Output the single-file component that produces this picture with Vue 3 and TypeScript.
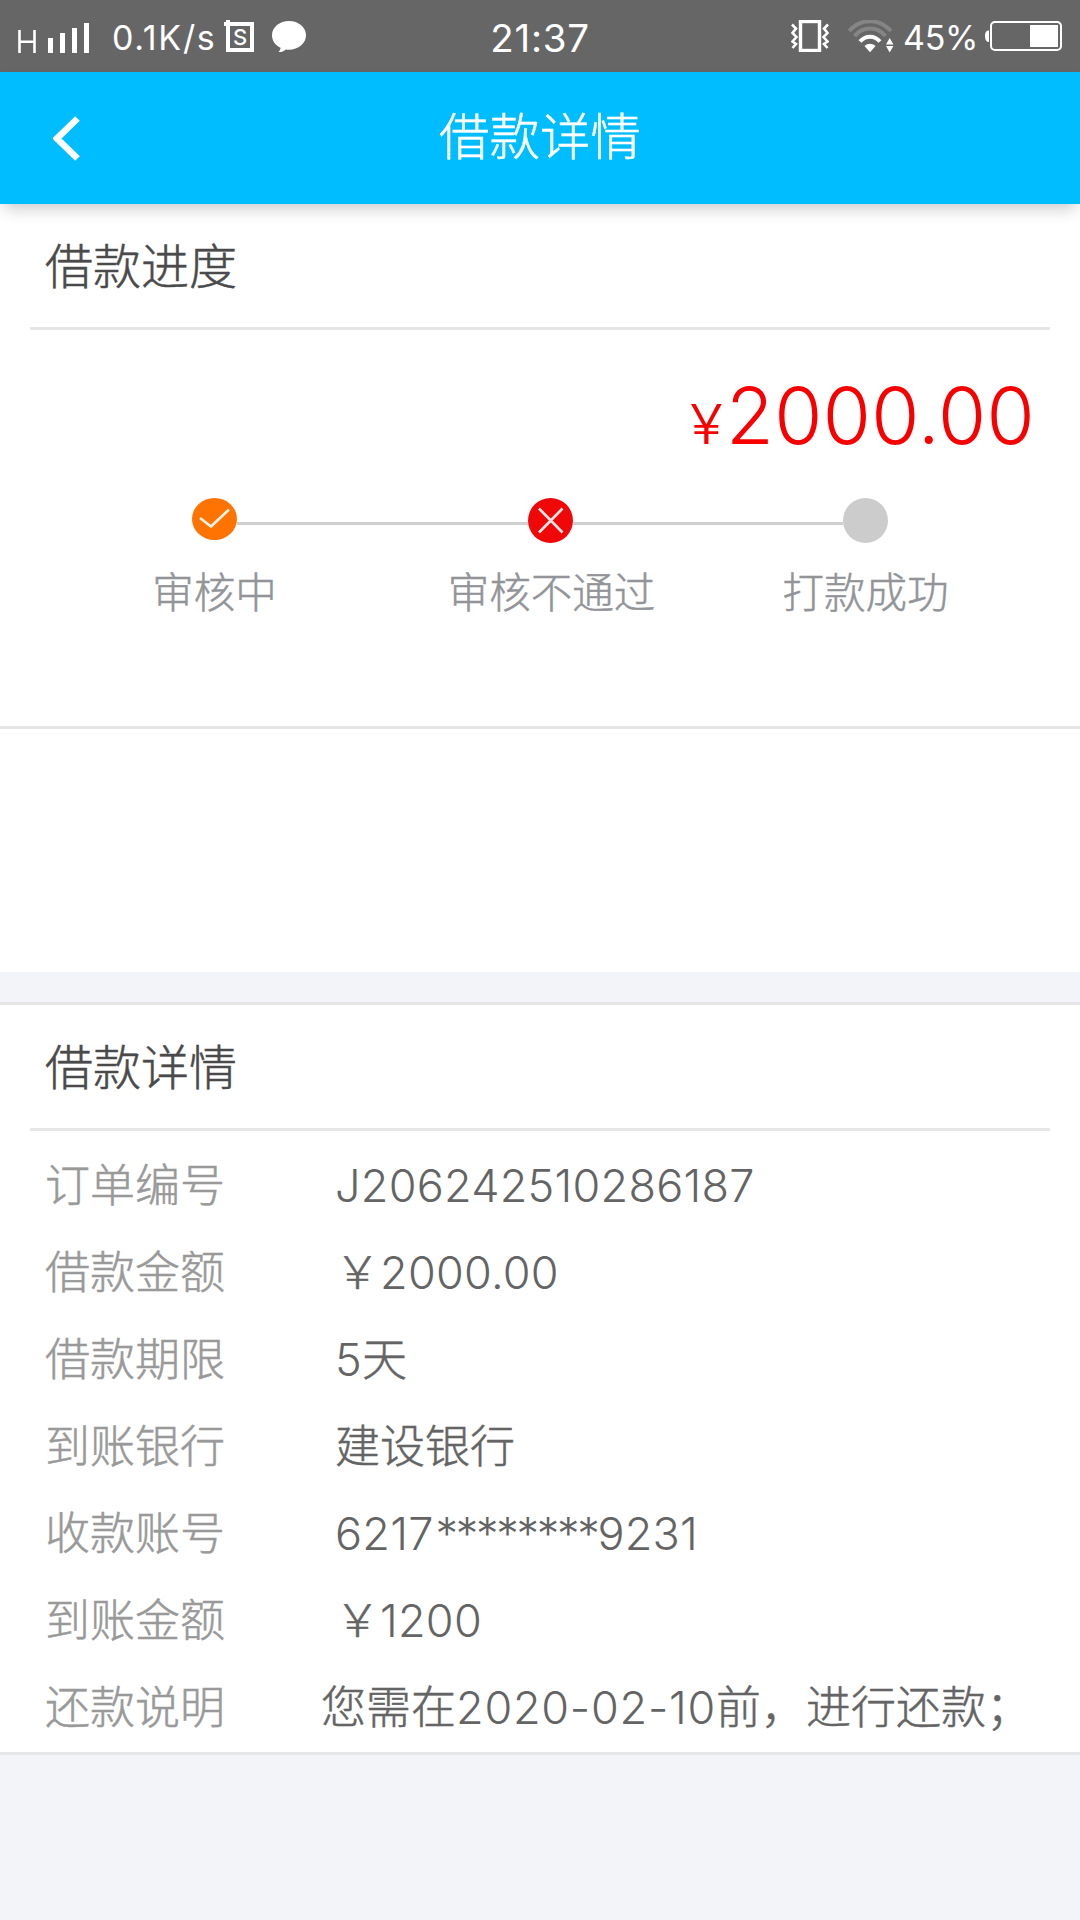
<script setup lang="ts">
type StepState = 'done' | 'failed' | 'pending'

interface Step {
  label: string
  state: StepState
}

interface Part {
  text: string
  kind: 'han' | 'num' | 'date' | 'mask'
}

interface Row {
  label: string
  value: string
  kind?: string
}

const steps: Step[] = [
  { label: '审核中', state: 'done' },
  { label: '审核不通过', state: 'failed' },
  { label: '打款成功', state: 'pending' },
]

const rows: Row[] = [
  { label: '订单编号', value: 'J206242510286187' },
  { label: '借款金额', value: '￥2000.00' },
  { label: '借款期限', value: '5天' },
  { label: '到账银行', value: '建设银行' },
  { label: '收款账号', value: '6217********9231' },
  { label: '到账金额', value: '￥1200' },
  { label: '还款说明', value: '您需在2020-02-10前，进行还款；', kind: 'note' },
]

// Splits a value into runs so Han text, numbers and masks are styled apart.
function parts(value: string): Part[] {
  const runs = value.match(/\*+|[A-Z0-9.-]+|[^A-Z0-9.*-]+/g) ?? []
  return runs.map((text) => ({
    text,
    kind: text[0] === '*' ? 'mask' : text.includes('-') ? 'date' : /[0-9]/.test(text) ? 'num' : 'han',
  }))
}
</script>

<template>
  <div class="page">
    <div class="status">
      <div class="left">
        <svg class="signal" width="72" height="72" viewBox="0 0 72 72">
          <path d="M1.5 30v23M16.500 30v23M1.500 41.700h15" stroke="#fff" stroke-width="2.600" fill="none" />
          <path d="M30 38h5v15h-5zM42 33h5v20h-5zM54 28h5v25h-5zM66 23h5v30h-5z" fill="#fff" />
        </svg>
        <span class="speed">0.1K/s</span>
        <span class="box">
          <svg width="30" height="32" viewBox="0 0 30 32">
            <path d="M4 0v5M0 4h28v26H4V4" stroke="#fff" stroke-width="4" fill="none" />
          </svg>
          <b>S</b>
        </span>
        <svg class="bubble" width="34" height="32" viewBox="0 0 34 32">
          <path d="M17 0C7.600 0 0 6.200 0 14.200c0 5.600 3.400 10.200 8.500 12.500 0 1.700-.6 3-2 4.300 3 .2 5.400-.9 7.300-2.600 1 .2 2.100.3 3.200.3 9.400 0 17-6.500 17-14.500S26.400 0 17 0z" fill="#fff" />
        </svg>
      </div>
      <span class="time">21:37</span>
      <div class="right">
        <svg width="38" height="32" viewBox="0 0 38 32">
          <rect x="9.500" y="1.500" width="19" height="29" fill="none" stroke="#fff" stroke-width="3.400" />
          <path d="M1 4.500l4 4-3.500 4.500L5.500 17 1.500 21.500 5 24 1.500 28M37 4.500l-4 4 3.500 4.500-4 4 4 4.500L33 24l3.500 4" fill="none" stroke="#fff" stroke-width="2.600" />
        </svg>
        <svg class="wifi" width="46" height="33" viewBox="0 0 46 33">
          <path d="M1 11C13-2 31-2 43 11" fill="none" stroke="#858585" stroke-width="4" />
          <path d="M6.500 16C15 6 29 6 37.500 16" fill="none" stroke="#858585" stroke-width="4" />
          <path d="M12 21.500c5.500-6.500 14.500-6.500 20 0" fill="none" stroke="#fff" stroke-width="4" />
          <path d="M16.500 26c3.500-3 7.500-3 11 0L22 32.200z" fill="#fff" />
          <path d="M38 24.500l3.700-6.500 3.700 6.500zM38 26h7.400l-3.700 6.500z" fill="#fff" />
        </svg>
        <span class="percent">45%</span>
        <svg class="battery" width="78" height="30" viewBox="0 0 78 30">
          <path d="M4 9.500C1.500 9.500 0 11 0 15s1.500 6 4 6z" fill="#fff" />
          <rect x="6" y="1" width="70" height="28" rx="4" fill="none" stroke="#fff" stroke-width="2" />
          <path d="M45 4h28v22H45z" fill="#fff" />
        </svg>
      </div>
    </div>

    <header class="bar">
      <svg class="back" width="27" height="45" viewBox="0 0 27 45">
        <path d="M24.500 2.500L4 22.500l20.500 20" fill="none" stroke="#fff" stroke-width="6.500" />
      </svg>
      <h1>借款详情</h1>
    </header>

    <section class="progress">
      <h2>借款进度</h2>
      <div class="amount"><span>¥</span>2000.00</div>
      <div class="steps">
        <div v-for="s in steps" :key="s.label" class="step">
          <div class="track">
            <i></i>
            <svg width="45" height="45" viewBox="0 0 45 45">
              <template v-if="s.state === 'done'">
                <ellipse cx="22.500" cy="21" rx="22.500" ry="21" fill="#ff7300" />
                <path d="M8 20l11 8.500L37 11.500" fill="none" stroke="#fff" stroke-opacity=".9" stroke-width="2.600" />
              </template>
              <template v-else-if="s.state === 'failed'">
                <circle cx="22.500" cy="22.500" r="22.500" fill="#f00808" />
                <path d="M11 10.500l23.500 24M34.500 10.500L11 34.500" fill="none" stroke="#fff" stroke-opacity=".9" stroke-width="2.600" />
              </template>
              <circle v-else cx="22.500" cy="22.500" r="22.500" fill="#ccc" />
            </svg>
            <i></i>
          </div>
          <div class="caption">{{ s.label }}</div>
        </div>
      </div>
    </section>

    <div class="blank"></div>

    <section class="detail">
      <h2>借款详情</h2>
      <dl>
        <div v-for="r in rows" :key="r.label" class="row" :class="r.kind">
          <dt>{{ r.label }}</dt>
          <dd><span v-for="(p, i) in parts(r.value)" :key="i" :class="p.kind">{{ p.text }}</span></dd>
        </div>
      </dl>
    </section>
  </div>
</template>

<style>
body {
  margin: 0;
  background: #f3f4f9;
}
</style>

<style scoped>
.page {
  width: 1080px;
  height: 1920px;
  overflow: hidden;
  background: #f3f4f9;
  font-family: Inter, 'Noto Sans CJK SC', sans-serif;
  font-weight: 300;
  white-space: nowrap;
}
svg {
  display: block;
  flex: none;
}
.status {
  display: flex;
  justify-content: space-between;
  height: 72px;
  background: #666;
  color: #fff;
  font-weight: 400;
  font-size: 34px;
  line-height: 75px;
}
.left,
.right {
  display: flex;
  width: 480px;
}
.signal {
  margin-left: 18px;
}
.speed {
  width: 112px;
  margin-left: 22px;
  letter-spacing: 1.7px;
}
.box {
  position: relative;
  margin-top: 20px;
}
.box b {
  position: absolute;
  left: 2px;
  top: 2px;
  width: 28px;
  text-align: center;
  font-size: 22px;
  font-weight: 500;
  line-height: 30px;
}
.bubble {
  margin: 21px 0 0 18px;
}
.time {
  font-size: 38.5px;
  line-height: 76px;
  letter-spacing: 0.7px;
}
.right {
  justify-content: flex-end;
}
.right svg {
  margin-top: 20px;
}
.right .wifi {
  margin-left: 19px;
}
.percent {
  width: 81px;
  text-align: center;
  margin-left: 6px;
  letter-spacing: -0.4px;
}
.right .battery {
  margin: 21px 17px 0 4px;
}
.bar {
  position: relative;
  display: grid;
  grid-template-columns: 1fr auto 1fr;
  height: 132px;
  background: #00bdff;
  box-shadow: 0 8px 16px -4px rgba(0, 0, 0, 0.22);
}
.back {
  margin: 44px 0 0 53px;
}
h1,
h2,
dl,
dd {
  margin: 0;
}
h1,
h2,
dt,
.caption,
.han {
  -webkit-text-stroke: 0.5px currentColor;
}
h1 {
  font-size: 50.5px;
  font-weight: 300;
  line-height: 130px;
  color: #fff;
}
h2 {
  height: 123px;
  margin: 0 30px;
  padding-left: 15px;
  border-bottom: 3px solid #e6e6e6;
  font-size: 48px;
  font-weight: 300;
  line-height: 125px;
  color: #4a4a4a;
}
.progress {
  height: 522px;
  background: #fff;
  border-bottom: 3px solid #e6e6e6;
}
.amount {
  height: 168px;
  padding-right: 45px;
  text-align: right;
  color: #f80000;
  font-size: 78px;
  line-height: 171px;
  letter-spacing: 0.3px;
}
.amount span {
  display: inline-block;
  font-size: 55px;
  line-height: 1;
  margin-right: 3px;
  transform: scaleX(1.1);
  transform-origin: right;
}
.steps {
  display: grid;
  grid-template-columns: 357px 315px 315px;
  margin-left: 36px;
}
.track {
  display: flex;
}
.track i {
  flex: 1;
  height: 3px;
  margin-top: 24px;
  background: #d0d0d0;
}
.step:first-child i:first-child,
.step:last-child i:last-child {
  background: none;
}
.caption {
  text-align: center;
  font-size: 41.5px;
  line-height: 60px;
  margin-top: 20px;
  color: #929498;
}
.step:nth-child(2) .caption {
  padding-left: 2px;
}
.blank {
  height: 243px;
  background: #fff;
}
.detail {
  margin-top: 30px;
  border-top: 3px solid #e6e6e6;
  border-bottom: 3px solid #e6e6e6;
  background: #fff;
}
dl {
  padding: 12px 0 0 45px;
}
.row {
  display: flex;
  height: 87px;
  font-size: 45px;
  line-height: 86px;
}
dt {
  width: 290px;
  color: #999;
}
dd {
  color: #646464;
}
.num {
  letter-spacing: 0.25px;
}
.date {
  letter-spacing: 0.75px;
}
.mask {
  margin-left: 2px;
  letter-spacing: -2.3px;
}
.note dd {
  margin-left: -14px;
}
</style>
